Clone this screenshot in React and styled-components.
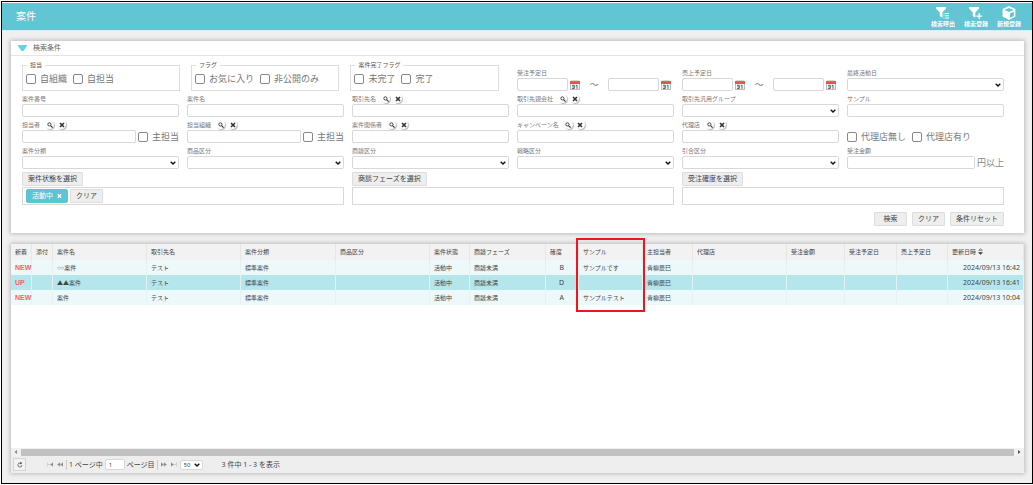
import React from "react";
import styled, { createGlobalStyle, css } from "styled-components";

const GlobalStyle = createGlobalStyle`
  *, *::before, *::after { box-sizing: border-box; }
  body {
    margin: 0;
    background: #fff;
    color: #555;
    font: 6px/8px "Noto Sans", "Noto Sans CJK JP", sans-serif;
  }
  button, input, select { font: inherit; color: inherit; margin: 0; }
  button { cursor: pointer; }
`;

const Frame = styled.div`
  display: flex;
  flex-direction: column;
  min-height: calc(100vh - 2px);
  margin: 1px 0 1px 1px;
  padding-top: 1px;
  border: 1px solid #000;
`;

const TopBar = styled.header`
  display: flex;
  align-items: center;
  justify-content: space-between;
  height: 28px;
  padding: 0 10px 0 14px;
  background: #62c5d4;
  border-bottom: 1px solid #d9eef1;
  color: #fff;
`;

const Title = styled.h1`
  margin: 0;
  padding-bottom: 2px;
  font-size: 10px;
  line-height: 12px;
  font-weight: 400;
`;

const TopActions = styled.nav`
  display: flex;
  gap: 7px;
`;

const TopAction = styled.button`
  display: flex;
  flex-direction: column;
  align-items: center;
  width: 26px;
  padding: 0;
  border: 0;
  background: none;
  color: #fff;
  font-weight: 700;
  line-height: 7px;
  white-space: nowrap;
  svg { display: block; width: 16px; height: 14px; margin-bottom: 1px; }
`;

const Main = styled.main`
  flex: 1;
  display: flex;
  flex-direction: column;
  gap: 11px;
  padding: 10px 8px 10px 9px;
  background: #f0f0f0;
`;

const Panel = styled.section`
  display: flex;
  flex-direction: column;
  background: #fff;
  box-shadow: 0 0 4px 1px #bbb;
  ${(p) => p.$grow && css`flex: 1;`}
`;

const PanelHead = styled.button`
  display: flex;
  align-items: center;
  gap: 6px;
  height: 15px;
  padding: 0 0 1px 7px;
  border: 0;
  border-bottom: 1px solid #e4e4e4;
  background: #fff;
  color: #666;
  font-size: 7px;
  svg { width: 9px; height: 6px; }
`;

const Form = styled.form`
  display: grid;
  grid-template-columns: repeat(6, minmax(0, 1fr));
  column-gap: 8px;
  padding: 5px 20px 7px 11px;
`;

const GroupStrip = styled.div`
  grid-column: span 3;
  display: flex;
  gap: 11px;
  padding: 0 10px 0 0;
`;

const Group = styled.fieldset`
  flex: ${(p) => p.$share || 15} 1 0;
  display: flex;
  align-items: center;
  gap: 6px;
  min-width: 0;
  height: 30px;
  margin: 0;
  padding: 0 3px 2px;
  border: 1px solid #ddd;
  legend { margin-left: 1px; padding: 0 3px; }
`;

const CheckLabel = styled.label`
  display: flex;
  align-items: center;
  gap: 4px;
  color: #777;
  font-size: 9px;
  line-height: 12px;
  white-space: nowrap;
`;

const CheckBox = styled.input.attrs({ type: "checkbox" })`
  appearance: none;
  width: 10px;
  height: 10px;
  border: 1px solid #888;
  border-radius: 2px;
  background: #fff;
  &:checked { background: #62c5d4; }
`;

const FieldBox = styled.div`
  display: flex;
  flex-direction: column;
  justify-content: flex-end;
  min-width: 0;
  padding-top: 3px;
`;

const LabelRow = styled.div`
  display: flex;
  align-items: center;
  height: 10px;
  gap: 3px;
  padding-bottom: 1px;
  color: #777;
  white-space: nowrap;
  label { margin-right: 2px; }
`;

const RoundButton = styled.button`
  display: grid;
  place-items: center;
  width: 9px;
  height: 9px;
  padding: 0;
  border: 0;
  border-radius: 50%;
  background: #fff;
  box-shadow: 1px 1px 1px #bbb;
  color: #333;
  svg { width: 6px; height: 6px; }
`;

const ControlRow = styled.div`
  display: flex;
  align-items: center;
  gap: ${(p) => p.$gap || 2}px;
  height: 13px;
`;

const TextInput = styled.input`
  flex: 1;
  min-width: 0;
  height: 13px;
  padding: 0 3px;
  border: 1px solid #d8d8d8;
  border-radius: 2px;
  background: #fff;
`;

const SelectWrap = styled.span`
  position: relative;
  display: flex;
  flex: 1;
  svg {
    position: absolute;
    right: 3px;
    top: 50%;
    width: 6px;
    height: 4px;
    margin-top: -2px;
    pointer-events: none;
  }
`;

const SelectInput = styled.select`
  appearance: none;
  flex: 1;
  min-width: 0;
  height: ${(p) => p.$height || 13}px;
  padding: 0 3px;
  border: 1px solid #d8d8d8;
  border-radius: 2px;
  background: #fff;
`;

const DateRow = styled(ControlRow)`
  padding-right: 3px;
`;

const Tilde = styled.span`
  width: 24px;
  color: #777;
  font-size: 9px;
  text-align: center;
`;

const CalendarButton = styled.button`
  display: block;
  width: 10px;
  height: 10px;
  padding: 0;
  border: 0;
  background: none;
  svg { display: block; width: 10px; height: 10px; }
`;

const Unit = styled.span`
  color: #888;
  font-size: 9px;
  line-height: 12px;
`;

const Picker = styled.div`
  grid-column: span 2;
  padding-top: 3px;
`;

const GrayButton = styled.button`
  display: block;
  height: 14px;
  min-width: 33px;
  padding: 0 5px;
  border: 1px solid #ddd;
  border-radius: 1px;
  background: #eee;
  color: #444;
  font-size: 7px;
  white-space: nowrap;
`;

const PickBox = styled.div`
  display: flex;
  align-items: center;
  gap: 2px;
  height: 18px;
  margin-top: 1px;
  padding: 0 3px;
  border: 1px solid #d8d8d8;
`;

const Chip = styled(GrayButton)`
  display: flex;
  align-items: center;
  justify-content: center;
  gap: 4px;
  width: 42px;
  border-color: #5dc4d4;
  border-radius: 2px;
  background: #5dc4d4;
  color: #fff;
  svg { width: 6px; height: 6px; }
`;

const Actions = styled.div`
  grid-column: 1 / -1;
  display: flex;
  justify-content: flex-end;
  gap: 5px;
  padding-top: 7px;
`;

const Table = styled.table`
  width: 100%;
  table-layout: fixed;
  border-collapse: separate;
  border-spacing: 0;
  color: #444;
`;

const Th = styled.th`
  position: relative;
  height: 16px;
  padding: 0 3px 1px 4px;
  border-right: 1px solid #e6e6e6;
  background: #f2f2f2;
  font-weight: 400;
  text-align: left;
  white-space: nowrap;
`;

const Tr = styled.tr`
  background: ${(p) => (p.$selected ? "#b4e6ec" : "#ecf8fa")};
`;

const Td = styled.td`
  height: 15px;
  padding: 0 ${(p) => p.$right || 3}px 0 4px;
  border-right: 1px solid #e4f2f4;
  text-align: ${(p) => (p.$right ? "right" : "left")};
  font-size: ${(p) => (p.$right ? 7 : 6)}px;
  white-space: nowrap;
`;

const Status = styled.strong`
  color: #f5616b;
  font: 700 7px/8px "Liberation Sans", sans-serif;
`;

const Narrow = styled.span`
  font-family: "Liberation Sans", sans-serif;
`;

const Highlight = styled.span`
  position: absolute;
  z-index: 1;
  top: -6px;
  left: -3px;
  right: -3px;
  height: 74px;
  border: 2px solid #f0141e;
  pointer-events: none;
`;

const SortMark = styled.svg`
  width: 5px;
  height: 7px;
  margin-left: 2px;
  vertical-align: middle;
`;

const Rest = styled.div`
  flex: 1;
`;

const ScrollBar = styled.div`
  display: flex;
  align-items: center;
  height: 8px;
  background: #f1f1f1;
  svg { width: 10px; height: 4px; }
`;

const Thumb = styled.div`
  flex: 1;
  height: 7px;
  background: #c1c1c1;
`;

const Pager = styled.footer`
  display: flex;
  align-items: center;
  gap: 2px;
  height: 17px;
  padding: 0 2px;
  background: #eee;
  color: #444;
  font-size: 7px;
  white-space: nowrap;
`;

const Reload = styled.button`
  display: grid;
  place-items: center;
  width: 13px;
  height: 13px;
  margin-right: 18px;
  padding: 0;
  border: 1px solid #d4d4d4;
  background: #f2f2f2;
  svg { width: 6px; height: 6px; }
`;

const PageButton = styled.button`
  display: grid;
  place-items: center;
  width: 8px;
  height: 10px;
  padding: 0;
  border: 0;
  background: none;
  color: #888;
  svg { width: 6px; height: 5px; }
`;

const Divider = styled.i`
  width: 1px;
  height: 10px;
  background: #ccc;
`;

const PageInput = styled(TextInput)`
  flex: none;
  width: 20px;
  height: 11px;
  font-size: 6px;
`;

const PageSize = styled.span`
  display: flex;
  width: 23px;
  font-size: 6px;
`;

const Count = styled.span`
  margin-left: 17px;
`;

const FilterListIcon = () => (
  <svg viewBox="0 0 16 14" fill="currentColor">
    <path d="M1 1h10v1.5L7.4 6.6v5.2L4.8 10V6.6L1 2.5z" />
    <path d="M8.5 7h1v1h-1zM10.2 7H14v1h-3.800zM8.500 9.300h1v1h-1zM10.200 9.300H14v1h-3.800zM8.500 11.600h1v1h-1zM10.200 11.600H14v1h-3.800z" />
  </svg>
);

const FilterPlusIcon = () => (
  <svg viewBox="0 0 16 14" fill="currentColor">
    <path d="M1 1h10v1.5L7.4 6.6v5.2L4.8 10V6.6L1 2.5z" />
    <path d="M10.500 7h1.300v2.400h2.400v1.300h-2.400V13h-1.300v-2.300H8.300V9.400h2.200z" />
  </svg>
);

const CubeIcon = () => (
  <svg viewBox="0 0 16 14">
    <path d="M8 0l6.4 3v7.6L8 14l-6.4-3.4V3z" fill="#fff" />
    <path d="M3.4 4L8 6.100 12.600 4 8 2z" fill="#62c5d4" />
    <path d="M8.9 7.600l3.900-1.900v4.200l-3.900 2.100z" fill="#62c5d4" />
  </svg>
);

const Chevron = () => (
  <svg viewBox="0 0 6 4">
    <path d="M.7.7L3 3 5.3.7" fill="none" stroke="#111" strokeWidth="1.4" />
  </svg>
);

const SearchIcon = () => (
  <svg viewBox="0 0 6 6" fill="none" stroke="currentColor">
    <circle cx="2.4" cy="2.4" r="1.6" strokeWidth=".9" />
    <path d="M3.6 3.6l2 2" strokeWidth="1.2" />
  </svg>
);

const CrossIcon = () => (
  <svg viewBox="0 0 6 6">
    <path d="M1 1l4 4M5 1L1 5" stroke="currentColor" strokeWidth="1.6" />
  </svg>
);

const CalendarIcon = () => (
  <svg viewBox="0 0 10 10">
    <rect x=".5" y="1.5" width="9" height="8" fill="#f4f4f4" stroke="#bbb" />
    <rect x="0" y="1" width="10" height="3" fill="#e2574c" />
    <path d="M2 0v2M4 0v2M6 0v2M8 0v2" stroke="#999" strokeWidth=".7" />
    <path d="M2 5.3h2.3v3.2H2M2.4 6.9h1.9M5.8 5.5l1.2-.2v3.5" fill="none" stroke="#444" strokeWidth=".8" />
  </svg>
);

const ARROWS = {
  first: "M.5.5v4M6 .7v3.6L3.4 2.5zM3.4 2.5H1",
  prev: "M3 .7v3.6L.4 2.5zM6 .7v3.6L3.4 2.5z",
  next: "M0 .7v3.6l2.6-1.8zM3 .7v3.6l2.6-1.8z",
  last: "M5.5.5v4M0 .7v3.6l2.6-1.8zM2.6 2.5H5",
};

const Arrow = ({ kind, label }) => (
  <PageButton aria-label={label}>
    <svg viewBox="0 0 6 5">
      <path d={ARROWS[kind]} fill="currentColor" stroke="currentColor" strokeWidth=".3" />
    </svg>
  </PageButton>
);

const Check = ({ children }) => (
  <CheckLabel>
    <CheckBox />
    {children}
  </CheckLabel>
);

const Select = ({ id, label }) => (
  <SelectWrap>
    <SelectInput id={id} aria-label={label}>
      <option></option>
    </SelectInput>
    <Chevron />
  </SelectWrap>
);

const Field = ({ id, label, lookup, children, select }) => (
  <FieldBox>
    <LabelRow>
      <label htmlFor={id}>{label}</label>
      {lookup && (
        <>
          <RoundButton type="button" aria-label={`${label} 検索`}><SearchIcon /></RoundButton>
          <RoundButton type="button" aria-label={`${label} クリア`}><CrossIcon /></RoundButton>
        </>
      )}
    </LabelRow>
    <ControlRow>
      {select ? <Select id={id} /> : <TextInput id={id} />}
      {children}
    </ControlRow>
  </FieldBox>
);

const DateField = ({ id, label }) => (
  <FieldBox>
    <LabelRow><label htmlFor={id}>{label}</label></LabelRow>
    <DateRow>
      <TextInput id={id} />
      <CalendarButton type="button" aria-label={`${label} 開始`}><CalendarIcon /></CalendarButton>
      <Tilde>～</Tilde>
      <TextInput aria-label={`${label} 終了`} />
      <CalendarButton type="button" aria-label={`${label} 終了`}><CalendarIcon /></CalendarButton>
    </DateRow>
  </FieldBox>
);

const COLUMNS = [
  ["新着", 21], ["添付", 21], ["案件名", 94], ["取引先名", 94], ["案件分類", 95],
  ["商品区分", 94], ["案件状態", 40], ["商談フェーズ", 76], ["確度", 33], ["サンプル", 64],
  ["主担当者", 50], ["代理店", 94], ["受注金額", 58], ["受注予定日", 52], ["売上予定日", 51],
  ["更新日時", 76],
];

const ROWS = [
  ["NEW", "", <><Narrow>○○</Narrow>案件</>, "テスト", "標準案件", "", "活動中", "商談未満", "B", "サンプルです", "青柳辰巳", "", "", "", "", "2024/09/13 16:42"],
  ["UP", "", "▲▲案件", "テスト", "標準案件", "", "活動中", "商談未満", "D", "", "青柳辰巳", "", "", "", "", "2024/09/13 16:41"],
  ["NEW", "", "案件", "テスト", "標準案件", "", "活動中", "商談未満", "A", "サンプルテスト", "青柳辰巳", "", "", "", "", "2024/09/13 10:04"],
];

const RIGHT_PADDING = { 8: 14, 15: 3 };

export default function App() {
  return (
    <>
      <GlobalStyle />
      <Frame>
        <TopBar>
          <Title>案件</Title>
          <TopActions>
            <TopAction><FilterListIcon />検索呼出</TopAction>
            <TopAction><FilterPlusIcon />検索登録</TopAction>
            <TopAction><CubeIcon />新規登録</TopAction>
          </TopActions>
        </TopBar>
        <Main>
          <Panel>
            <PanelHead type="button">
              <svg viewBox="0 0 9 6"><path d="M0 0h9v1L5.5 6h-2L0 1z" fill="#62d5e0" /></svg>
              検索条件
            </PanelHead>
            <Form onSubmit={(e) => e.preventDefault()}>
              <GroupStrip>
                <Group $share={16}><legend>担当</legend><Check>自組織</Check><Check>自担当</Check></Group>
                <Group><legend>フラグ</legend><Check>お気に入り</Check><Check>非公開のみ</Check></Group>
                <Group><legend>案件完了フラグ</legend><Check>未完了</Check><Check>完了</Check></Group>
              </GroupStrip>
              <DateField id="order-date" label="受注予定日" />
              <DateField id="sales-date" label="売上予定日" />
              <Field id="last-activity" label="最終活動日" select />

              <Field id="deal-no" label="案件番号" />
              <Field id="deal-name" label="案件名" />
              <Field id="customer" label="取引先名" lookup />
              <Field id="parent" label="取引先親会社" lookup />
              <Field id="group" label="取引先汎用グループ" select />
              <Field id="sample" label="サンプル" />

              <Field id="owner" label="担当者" lookup><Check>主担当</Check></Field>
              <Field id="owner-org" label="担当組織" lookup><Check>主担当</Check></Field>
              <Field id="related" label="案件関係者" lookup />
              <Field id="campaign" label="キャンペーン名" lookup />
              <Field id="agency" label="代理店" lookup />
              <FieldBox>
                <ControlRow $gap={6}><Check>代理店無し</Check><Check>代理店有り</Check></ControlRow>
              </FieldBox>

              <Field id="deal-class" label="案件分類" select />
              <Field id="product-class" label="商品区分" select />
              <Field id="talk-class" label="商談区分" select />
              <Field id="strategy" label="戦略区分" select />
              <Field id="inquiry" label="引合区分" select />
              <Field id="amount" label="受注金額"><Unit>円以上</Unit></Field>

              <Picker>
                <GrayButton type="button">案件状態を選択</GrayButton>
                <PickBox>
                  <Chip type="button">活動中<CrossIcon /></Chip>
                  <GrayButton type="button">クリア</GrayButton>
                </PickBox>
              </Picker>
              <Picker>
                <GrayButton type="button">商談フェーズを選択</GrayButton>
                <PickBox />
              </Picker>
              <Picker>
                <GrayButton type="button">受注確度を選択</GrayButton>
                <PickBox />
              </Picker>

              <Actions>
                <GrayButton type="submit">検索</GrayButton>
                <GrayButton type="reset">クリア</GrayButton>
                <GrayButton type="button">条件リセット</GrayButton>
              </Actions>
            </Form>
          </Panel>

          <Panel $grow>
            <Table>
              <colgroup>
                {COLUMNS.map(([name, width]) => <col key={name} width={width} />)}
              </colgroup>
              <thead>
                <tr>
                  {COLUMNS.map(([name]) => (
                    <Th key={name}>
                      {name}
                      {name === "サンプル" && <Highlight />}
                      {name === "更新日時" && (
                        <SortMark viewBox="0 0 5 7">
                          <path d="M.8 2.4L2.5.6l1.7 1.8z" fill="none" stroke="#444" strokeWidth=".6" />
                          <path d="M0 4.2h5L2.5 6.8z" fill="#333" />
                        </SortMark>
                      )}
                    </Th>
                  ))}
                </tr>
              </thead>
              <tbody>
                {ROWS.map((row, r) => (
                  <Tr key={r} $selected={r === 1}>
                    {row.map((cell, c) => (
                      <Td key={c} $right={RIGHT_PADDING[c]}>
                        {c === 0 ? <Status>{cell}</Status> : cell}
                      </Td>
                    ))}
                  </Tr>
                ))}
              </tbody>
            </Table>
            <Rest />
            <ScrollBar>
              <svg viewBox="0 0 10 4"><path d="M6 0v4L3.500 2z" fill="#888" /></svg>
              <Thumb />
              <svg viewBox="0 0 10 4"><path d="M4 0v4l2.500-2z" fill="#555" /></svg>
            </ScrollBar>
            <Pager>
              <Reload aria-label="再読み込み">
                <svg viewBox="0 0 6 6">
                  <path d="M4.9 3a2 2 0 1 1-1.4-1.9" fill="none" stroke="#444" strokeWidth=".7" />
                  <path d="M3 0l2.4 1L3.400 2.600z" fill="#444" />
                </svg>
              </Reload>
              <Arrow kind="first" label="最初のページ" />
              <Arrow kind="prev" label="前のページ" />
              <Divider />
              <label htmlFor="page">1 ページ中</label>
              <PageInput id="page" defaultValue="1" />
              <span>ページ目</span>
              <Divider />
              <Arrow kind="next" label="次のページ" />
              <Arrow kind="last" label="最後のページ" />
              <PageSize>
                <SelectWrap>
                  <SelectInput $height={10} aria-label="表示件数">
                    <option>50</option>
                  </SelectInput>
                  <Chevron />
                </SelectWrap>
              </PageSize>
              <Count>3 件中 1 - 3 を表示</Count>
            </Pager>
          </Panel>
        </Main>
      </Frame>
    </>
  );
}
